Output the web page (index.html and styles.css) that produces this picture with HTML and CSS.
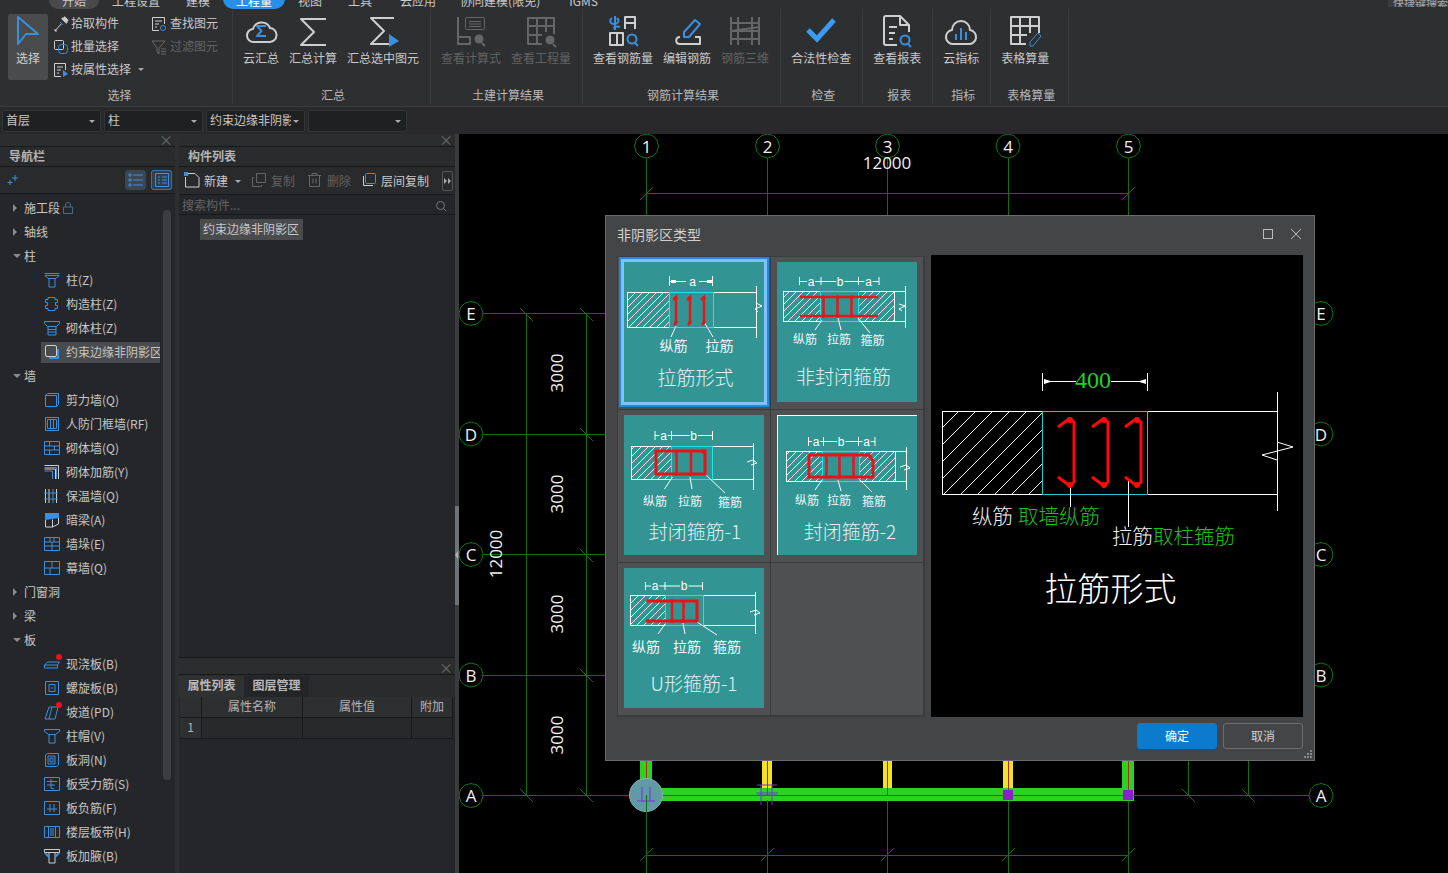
FILE: index.html
```html
<!DOCTYPE html>
<html lang="zh-CN">
<head>
<meta charset="utf-8">
<title>非阴影区类型</title>
<link rel="stylesheet" href="styles.css">
</head>
<body>
<div class="app">
  <div class="tabs">
    <span class="tab pill">开始</span><span class="tab">工程设置</span><span class="tab">建模</span><span class="tab active">工程量</span><span class="tab">视图</span><span class="tab">工具</span><span class="tab nudge">云应用</span><span class="tab">协同建模(限免)</span><span class="tab igms">IGMS</span>
    <span class="quick">快捷键搜索</span>
  </div>

  <div class="ribbon">
    <section class="group first">
      <div class="items">
        <div class="select-btn">
          <svg class="ic34" viewBox="0 0 34 34"><path class="b2" d="M7 3 27 20H15L7 30Z"/></svg>
          <span>选择</span>
        </div>
        <div class="smallcol wide">
          <div class="small"><svg class="ic16" viewBox="0 0 16 16"><path class="w1" d="M2 15 9 7M4 15H2v-2"/><path class="w2" d="M9 2l5 5M11 1l4 4"/><path class="b1" d="M7 6l3 3"/></svg>拾取构件</div>
          <div class="small"><svg class="ic16" viewBox="0 0 16 16"><rect class="w1" x="1.500" y="1.500" width="9" height="9" rx="1"/><rect class="b1" x="5.500" y="5.500" width="9" height="9" rx="3"/></svg>批量选择</div>
          <div class="small"><svg class="ic16" viewBox="0 0 16 16"><path class="w1" d="M8 14.500H1.500v-13h11V8M4 5h6M4 8h4M4 11h2"/><path class="bf" d="M10 8l5 4-5 3z"/></svg>按属性选择<i class="caret"></i></div>
        </div>
        <div class="smallcol">
          <div class="small"><svg class="ic16" viewBox="0 0 16 16"><path class="w1" d="M8 14.500H1.500v-13h12V8M4 5h7M4 8h4M4 11h2"/><circle class="b1" cx="12" cy="12" r="2.500"/></svg>查找图元</div>
          <div class="small off"><svg class="ic16" viewBox="0 0 16 16"><path class="d1" d="M1 2h13L8 9v6L6 13V9zM10 10h5M10 12.500h5M10 15h5"/></svg>过滤图元</div>
        </div>
      </div>
      <h3>选择</h3>
    </section>

    <section class="group">
      <div class="items">
        <div class="big"><svg class="ic34" viewBox="0 0 34 34"><path class="w2" d="M10 28a6.500 6.500 0 0 1-1-13 9 9 0 0 1 17-1 7 7 0 0 1-1 14Z"/><path class="b2" d="M22 12h-9l4.500 5-4.500 5h9"/></svg><span>云汇总</span></div>
        <div class="big"><svg class="ic34" viewBox="0 0 34 34"><path class="w2" d="M30 5H5l13 13L5 31h25"/></svg><span>汇总计算</span></div>
        <div class="big"><svg class="ic34" viewBox="0 0 34 34"><path class="w2" d="M28 4H5l13 13L5 30h20"/><path class="bf" d="M23 20l10 7-10 6z"/></svg><span>汇总选中图元</span></div>
      </div>
      <h3>汇总</h3>
    </section>

    <section class="group">
      <div class="items">
        <div class="big off"><svg class="ic34" viewBox="0 0 34 34"><path class="d2" d="M4 3v27h12v-7H4"/><rect class="d1" x="11.500" y="3.500" width="19" height="12" rx="1"/><path class="d1" d="M15 7.500h12M15 10h12M15 12.500h12"/><circle class="dh" cx="25" cy="25" r="5"/><path class="d2" d="M28 29l3 3"/></svg><span>查看计算式</span></div>
        <div class="big off"><svg class="ic34" viewBox="0 0 34 34"><path class="d2" d="M18 30H4V4h26v16M4 12h26M4 21h14M13 4v26M22 4v14"/><circle class="dh" cx="26" cy="26" r="5"/><path class="d2" d="M29 30l3 3"/></svg><span>查看工程量</span></div>
      </div>
      <h3>土建计算结果</h3>
    </section>

    <section class="group">
      <div class="items">
        <div class="big"><svg class="ic34" viewBox="0 0 34 34"><path class="b2" d="M7 14c3-2 5-2 7-1M6 4c-3 2-2 6 2 6s6-3 3-6M9 2v14"/><path class="w2" d="M19 15V3h10v12M19 9h10M4 19v12h13V19ZM11 19v12"/><circle class="b2" cx="26" cy="25" r="4.500"/><path class="b2" d="M29 29l3 3"/></svg><span>查看钢筋量</span></div>
        <div class="big"><svg class="ic34" viewBox="0 0 34 34"><path class="w2" d="M10 23c-5 0-5 7 0 7h20v-7h-5"/><path class="b2" d="M14 23v-5L25 6l5 4-11 13Z"/></svg><span>编辑钢筋</span></div>
        <div class="big off"><svg class="ic34" viewBox="0 0 34 34"><path class="d2" d="M3 3v28M10 3v28M24 3v28M31 3v28M3 9l28 0M3 17l28-4M3 17h28M3 25h28"/></svg><span>钢筋三维</span></div>
      </div>
      <h3>钢筋计算结果</h3>
    </section>

    <section class="group">
      <div class="items">
        <div class="big"><svg class="ic34" viewBox="0 0 34 34"><path class="check" d="M4 16l9 9L30 6"/></svg><span>合法性检查</span></div>
      </div>
      <h3>检查</h3>
    </section>

    <section class="group">
      <div class="items">
        <div class="big"><svg class="ic34" viewBox="0 0 34 34"><path class="w2" d="M17 31H6a2 2 0 0 1-2-2V4a2 2 0 0 1 2-2h14l9 9v7M20 2v9h9M9 13h8M9 19h6M9 25h4"/><circle class="b2" cx="25" cy="26" r="4.500"/><path class="b2" d="M28 30l3 3"/></svg><span>查看报表</span></div>
      </div>
      <h3>报表</h3>
    </section>

    <section class="group">
      <div class="items">
        <div class="big"><svg class="ic34" viewBox="0 0 34 34"><path class="w2" d="M10 30a7 7 0 0 1-2-14 9 9 0 0 1 18 0 7 7 0 0 1-2 14Z"/><path class="b2" d="M12 20v6M17 14v12M22 18v8"/></svg><span>云指标</span></div>
      </div>
      <h3>指标</h3>
    </section>

    <section class="group last">
      <div class="items">
        <div class="big"><svg class="ic34" viewBox="0 0 34 34"><path class="w2" d="M18 30H3V3h28v16M3 12h28M3 21h16M12 3v27M22 3v16"/><path class="b1" d="M22 32v-4l8-9 3 3-8 10Z"/></svg><span>表格算量</span></div>
      </div>
      <h3>表格算量</h3>
    </section>
  </div>

  <div class="selectors">
    <div class="combo"><span>首层</span><i class="caret"></i></div>
    <div class="combo"><span>柱</span><i class="caret"></i></div>
    <div class="combo"><span>约束边缘非阴影区</span><i class="caret"></i></div>
    <div class="combo"><span></span><i class="caret"></i></div>
  </div>

  <div class="workspace">
    <aside class="nav">
      <div class="strip"><span class="x">×</span></div>
      <div class="ptitle">导航栏</div>
      <div class="navtools">
        <svg class="ic12" viewBox="0 0 12 12"><path class="b1" d="M8 1v6M5 4h6M3 6v5M0.500 8.500h5"/></svg>
        <span class="toggle"><svg class="ic16" viewBox="0 0 16 16"><path class="b1" d="M1 2h2v2H1zM1 7h2v2H1zM1 12h2v2H1zM5 3h10M5 8h10M5 13h10"/></svg></span>
        <span class="toggle on"><svg class="ic16" viewBox="0 0 16 16"><path class="b1" d="M1.500 1.500h13v13h-13zM4 5h2M8 5h5M4 8h2M8 8h5M4 11h2M8 11h5"/></svg></span>
      </div>
      <div class="tree">
        <div class="parent"><i class="tri"></i>施工段<svg class="lock" viewBox="0 0 10 12"><path class="lk" d="M.5 5h9v6.500h-9zM2.500 5V3a2.500 2.500 0 0 1 5 0v2"/></svg></div>
        <div class="parent"><i class="tri"></i>轴线</div>
        <div class="parent"><i class="tri down"></i>柱</div>
        <div class="child"><svg class="ic16" viewBox="0 0 16 16"><path class="b1" d="M.5 1.500h15M1 3.500h14l-3 3H4ZM5 6.500v8.500h6V6.500"/></svg>柱(Z)</div>
        <div class="child"><svg class="ic16" viewBox="0 0 16 16"><path class="b1" d="M4 1.500h7v2h2.500v3h-2v3h2v3H11v2H4v-2H1.500v-3h2v-3h-2v-3H4Z"/></svg>构造柱(Z)</div>
        <div class="child"><svg class="ic16" viewBox="0 0 16 16"><path class="b1" d="M.5 1.500h15v2l-3 3H3.500l-3-3ZM4 6.500h8v8.500H4ZM4 9.500h8M4 12h8"/></svg>砌体柱(Z)</div>
        <div class="child sel"><svg class="ic16" viewBox="0 0 16 16"><path class="w1" d="M3 1.500h8a1.500 1.500 0 0 1 1.500 1.500v8a1.500 1.500 0 0 1-1.500 1.500H3A1.500 1.500 0 0 1 1.500 11V3A1.500 1.500 0 0 1 3 1.500Z"/><path class="b2" d="M14 5v9H5"/></svg>约束边缘非阴影区</div>
        <div class="parent"><i class="tri down"></i>墙</div>
        <div class="child"><svg class="ic16" viewBox="0 0 16 16"><path class="b1" d="M1.500 3.500h11v11h-11zM1.500 3.500l2-2h11v11l-2 2"/></svg>剪力墙(Q)</div>
        <div class="child"><svg class="ic16" viewBox="0 0 16 16"><path class="b1" d="M1.500 1.500h13v13h-13zM3.500 3.500h9v9h-9zM6.500 3.500v9M9.500 3.500v9"/></svg>人防门框墙(RF)</div>
        <div class="child"><svg class="ic16" viewBox="0 0 16 16"><path class="b1" d="M.5 1.500h15v13H.5zM.5 6h15M.5 10h15M5.500 1.500V6M10.500 6v4M5.500 10v4.500"/></svg>砌体墙(Q)</div>
        <div class="child"><svg class="ic16" viewBox="0 0 16 16"><path class="w1" d="M.5 1.500h14V15M.5 5h11v10"/><path class="b1" d="M.5 3.500h12V15M.5 7h8v8"/></svg>砌体加筋(Y)</div>
        <div class="child"><svg class="ic16" viewBox="0 0 16 16"><path class="w1" d="M1.500 1v14M12.500 1v14M5 1v14"/><path class="b1" d="M9 1v14M0 5h14M0 11h14"/></svg>保温墙(Q)</div>
        <div class="child"><svg class="ic16" viewBox="0 0 16 16"><path class="bf" d="M1 1h14v5L1 8Z"/><path class="w1" d="M1.500 8v7h7V7.500M8.500 15l6-3V6"/></svg>暗梁(A)</div>
        <div class="child"><svg class="ic16" viewBox="0 0 16 16"><path class="b1" d="M.5 1.500h15v13H.5zM.5 6h15M.5 10h15M6 1.500V6M10 1.500V6M8 6v8.500"/></svg>墙垛(E)</div>
        <div class="child"><svg class="ic16" viewBox="0 0 16 16"><path class="b1" d="M.5 1.500h15v13H.5zM.5 8h15M8 1.500V8M6 8v6.500"/></svg>幕墙(Q)</div>
        <div class="parent"><i class="tri"></i>门窗洞</div>
        <div class="parent"><i class="tri"></i>梁</div>
        <div class="parent"><i class="tri down"></i>板</div>
        <div class="child"><svg class="ic16" viewBox="0 0 16 16"><path class="b1" d="M.5 9l3-3h12l-2 3ZM.5 9v3h13V9"/></svg><b class="dot"></b>现浇板(B)</div>
        <div class="child"><svg class="ic16" viewBox="0 0 16 16"><path class="b1" d="M1.500 1.500h13v13h-13zM5 4.500h6v7H5zM8 7v2"/></svg>螺旋板(B)</div>
        <div class="child"><svg class="ic16" viewBox="0 0 16 16"><path class="b1" d="M1 15 5 3h6l3 0-3 12ZM8 3 5 15"/></svg><b class="dot"></b>坡道(PD)</div>
        <div class="child"><svg class="ic16" viewBox="0 0 16 16"><path class="b1" d="M.5 1.500h15v2l-4 3h-7l-4-3ZM5 6.500V15h6V6.500"/></svg>柱帽(V)</div>
        <div class="child"><svg class="ic16" viewBox="0 0 16 16"><path class="b1" d="M1.500 3l2-1.500h11V13l-2 1.500h-11ZM4 4h7v8H4ZM6 6h3v4H6Z"/></svg>板洞(N)</div>
        <div class="child"><svg class="ic16" viewBox="0 0 16 16"><path class="b1" d="M.5 1.500h15v13H.5zM3 5.500h10M3 9h8M7 3v9l3 1"/></svg>板受力筋(S)</div>
        <div class="child"><svg class="ic16" viewBox="0 0 16 16"><path class="b1" d="M.5 1.500h15v13H.5zM3 9h10M6 4v8M10 4v8"/></svg>板负筋(F)</div>
        <div class="child"><svg class="ic16" viewBox="0 0 16 16"><path class="b1" d="M.5 2.500h15v11H.5zM4.500 2.500v11M11.500 2.500v11M7 4v8M9 4v8"/></svg>楼层板带(H)</div>
        <div class="child"><svg class="ic16" viewBox="0 0 16 16"><path class="w1" d="M.5 1.500h15v3H.5zM5 4.500V15h6V4.500"/><path class="b2" d="M1 5l4 4M15 5l-4 4"/></svg>板加腋(B)</div>
      </div>
      <div class="navthumb"></div>
    </aside>

    <div class="mid">
      <div class="upper">
        <div class="strip"><span class="x">×</span></div>
        <div class="ptitle">构件列表</div>
        <div class="midtools">
          <span class="tool new"><svg class="ic16" viewBox="0 0 16 16"><path class="w1" d="M4 2.500V1.500h7l4 4v9.500H1.500V5"/><path class="bf" d="M0 0h4v4H0z"/></svg>新建<i class="caret"></i></span>
          <span class="tool off copy"><svg class="ic16" viewBox="0 0 16 16"><path class="d1" d="M5.500 1.500h9v9h-9zM3 5.500H1.500v9h9V13"/></svg>复制</span>
          <span class="tool off del"><svg class="ic16" viewBox="0 0 16 16"><path class="d1" d="M1 3.500h13M5 3.500v-2h5v2M2.500 3.500v11h10v-11M6 6.500v5M9 6.500v5"/></svg>删除</span>
          <span class="tool"><svg class="ic16" viewBox="0 0 16 16"><rect class="b1" x="4.500" y="1.500" width="10" height="10" rx="1"/><path class="w1" d="M2.500 4v9.500H12"/></svg>层间复制</span>
          <span class="more"><svg class="ic8" viewBox="0 0 8 8"><path class="gf" d="M0 1l3 3-3 3zM4 1l3 3-3 3z"/></svg></span>
        </div>
        <div class="search"><span>搜索构件...</span><svg class="ic12" viewBox="0 0 12 12"><circle class="g1" cx="5.500" cy="5.500" r="4"/><path class="g1" d="M8.500 8.500l2.500 2.500"/></svg></div>
        <div class="listitem">约束边缘非阴影区</div>
      </div>
      <div class="lower">
        <div class="strip"><span class="x">×</span></div>
        <div class="ptabs"><span class="ptab on">属性列表</span><span class="ptab">图层管理</span></div>
        <div class="ptable">
          <div class="th"></div><div class="th">属性名称</div><div class="th">属性值</div><div class="th">附加</div>
          <div class="td idx">1</div><div class="td"></div><div class="td"></div><div class="td"></div>
        </div>
      </div>
    </div>

    <div class="splitter"><span class="handle"><i></i></span></div>

    <main class="canvas">
      <svg class="cad" viewBox="459 134 989 739">
        <defs>
          <polygon id="bub" points="12,0 10.400,6 6,10.400 0,12 -6,10.400 -10.400,6 -12,0 -10.400,-6 -6,-10.400 0,-12 6,-10.400 10.400,-6"/>
        </defs>
        <g class="grid">
          <path d="M646.500 158V873M767.500 158V873M887.500 158V873M1008.500 158V873M1128.500 158V873"/>
          <path d="M483 313.500H1309M483 434.500H1309M483 554.500H1309M483 675.500H1309M483 795.500H1309"/>
          <path d="M646.500 193.500H1128.500M646.500 855.500H1128.500"/>
          <path d="M526.500 313.500V795.500M586.500 313.500V795.500M1188.500 313.500V795.500M1248.500 313.500V795.500"/>
          <path d="M640 200l13-13M1122 200l13-13M640 861l13-13M761 861l13-13M881 861l13-13M1002 861l13-13M1122 861l13-13"/>
          <path d="M520 308l13 13M580 308l13 13M580 428l13 13M580 549l13 13M580 669l13 13M520 789l13 13M580 789l13 13M1182 789l13 13M1242 789l13 13"/>
        </g>
        <g class="beams">
          <rect class="green" x="640" y="740" width="12" height="50"/>
          <rect class="green" x="1122" y="740" width="12" height="50"/>
          <rect class="yellow" x="762" y="740" width="10" height="50"/>
          <rect class="yellow" x="883" y="740" width="9" height="50"/>
          <rect class="yellow" x="1003" y="740" width="10" height="50"/>
          <rect class="green" x="646" y="788" width="488" height="13"/>
          <path class="redl" d="M646 795.500H1134M646.500 740V795M767.500 740V795M887.500 740V795M1008.500 740V795M1128.500 740V795"/>
          <circle class="node" cx="646" cy="795" r="16.500"/>
          <rect class="purple" x="1003" y="790" width="10" height="10"/>
          <rect class="purple" x="1123" y="790" width="10" height="10"/>
          <path class="violet" d="M642 787v14M650 787v14M637 801h18M757 785h20M757 795h20M761 785v20M772 785v20M756 793h22"/>
          <path class="gridover" d="M646.500 795V873M767.500 800V873M887.500 801V873M1008.500 801V873M1128.500 801V873M1134 795.500H1309"/>
        </g>
        <g class="bubbles">
          <use href="#bub" x="646.500" y="146"/><use href="#bub" x="767.500" y="146"/><use href="#bub" x="887.500" y="146"/><use href="#bub" x="1008" y="146"/><use href="#bub" x="1128.500" y="146"/>
          <use href="#bub" x="471" y="313.500"/><use href="#bub" x="471" y="434"/><use href="#bub" x="471" y="554.500"/><use href="#bub" x="471" y="675"/><use href="#bub" x="471" y="795.500"/>
          <use href="#bub" x="1321" y="313.500"/><use href="#bub" x="1321" y="434"/><use href="#bub" x="1321" y="554.500"/><use href="#bub" x="1321" y="675"/><use href="#bub" x="1321" y="795.500"/>
        </g>
        <g class="captxt">
          <text x="646.500" y="146">1</text><text x="767.500" y="146">2</text><text x="887.500" y="146">3</text><text x="1008" y="146">4</text><text x="1128.500" y="146">5</text>
          <text x="471" y="313.500">E</text><text x="471" y="434">D</text><text x="471" y="554.500">C</text><text x="471" y="675">B</text><text x="471" y="795.500">A</text>
          <text x="1321" y="313.500">E</text><text x="1321" y="434">D</text><text x="1321" y="554.500">C</text><text x="1321" y="675">B</text><text x="1321" y="795.500">A</text>
          <text x="887" y="162">12000</text>
          <text x="495" y="554" transform="rotate(-90 495 554)">12000</text>
          <text x="556" y="373" transform="rotate(-90 556 373)">3000</text>
          <text x="556" y="494" transform="rotate(-90 556 494)">3000</text>
          <text x="556" y="614" transform="rotate(-90 556 614)">3000</text>
          <text x="556" y="735" transform="rotate(-90 556 735)">3000</text>
        </g>
      </svg>
    </main>
  </div>

  <div class="dialog">
    <header class="dlghead">
      <span class="dlgtitle">非阴影区类型</span>
      <svg class="winbtn" viewBox="0 0 12 12"><rect class="wb" x="1.500" y="1.500" width="9" height="9"/></svg>
      <svg class="winbtn close" viewBox="0 0 12 12"><path class="wb" d="M1 1l10 10M11 1 1 11"/></svg>
    </header>
    <div class="dlgbody">
      <div class="cards">
        <div class="cell"><div class="card selected">
          <svg class="thumb" viewBox="0 0 140 140">
            <defs><pattern id="h1" width="7" height="7" patternUnits="userSpaceOnUse"><path class="hl" d="M-1 1L1-1M0 7L7 0M6 8L8 6"/></pattern></defs>
            <rect class="hatch" x="3.500" y="30.500" width="42" height="35"/>
            <path class="ln" d="M45 30.500H132.500V65.500H45M132.500 24V76M132 41l6 3-7 3 3 3"/>
            <rect class="cy" x="45.500" y="30.500" width="44" height="35"/>
            <path class="ln" d="M45.500 14v10M88.500 14v10M46 19.500h16M75 19.500h13M52 64l-5 11M80 60l9 15"/>
            <path class="dots" d="M47 18h5v3h-5zM83 18h5v3h-5z"/>
            <path class="rd" d="M49 38l3-3V61l-2 2M63 38l3-3V61l-2 2M77 38l3-3V61l-2 2"/>
            <path class="rn" d="M52 36h0M52 60h0M66 36h0M66 60h0M80 36h0M80 60h0"/>
            <text class="t dimt" x="68.500" y="19.500">a</text>
            <text class="t lb14" x="49.500" y="85">纵筋</text><text class="t lb14" x="95.500" y="85">拉筋</text>
            <text class="t ttl" x="71.500" y="116">拉筋形式</text>
          </svg>
        </div></div>
        <div class="cell"><div class="card">
          <svg class="thumb" viewBox="0 0 140 140">
            <rect class="hatch" x="6.500" y="29.500" width="37" height="30"/>
            <rect class="hatch" x="81.500" y="29.500" width="36" height="30"/>
            <path class="ln" d="M6.500 29.500H128M6.500 59.500H128M117.500 29.500V59.500M128.500 24V66M122 42l6 2-6 3 3 2"/>
            <rect class="cy" x="43.500" y="29.500" width="38" height="30"/>
            <path class="ln" d="M22.500 15v8M44 15v8M81.500 15v8M102 15v8M22.500 19.500H102M45 58l-7 10M61 56l3 12M81 56l12 15"/>
            <path class="rd" d="M23 35H101M23 54H101M46.500 35V54M60.500 35V54M74.500 35V54"/>
            <path class="rn" d="M46.500 35h0M60.500 35h0M74.500 35h0M46.500 54h0M60.500 54h0M74.500 54h0"/>
            <text class="t dimt" x="34" y="19.500">a</text><text class="t dimt" x="63" y="19.500">b</text><text class="t dimt" x="91.500" y="19.500">a</text>
            <text class="t lb12" x="28" y="78">纵筋</text><text class="t lb12" x="62" y="78">拉筋</text><text class="t lb12" x="95.500" y="79">箍筋</text>
            <text class="t ttl" x="66.500" y="115">非封闭箍筋</text>
          </svg>
        </div></div>
        <div class="cell"><div class="card">
          <svg class="thumb" viewBox="0 0 140 140">
            <rect class="hatch" x="7.500" y="31.500" width="40" height="33"/>
            <path class="ln" d="M7.500 31.500H129.500M7.500 64.500H129.500M129.500 28V75M123 47l6-2 4 3-6 2"/>
            <rect class="cy" x="47.500" y="31.500" width="41" height="33"/>
            <path class="ln" d="M31 16v9M47.500 16v9M88.500 16v9M31 20.500H88.500M48.500 62l-8 12M66 62l2 12M81 59l20 19"/>
            <path class="rdb" d="M32 36H81V59H32Z"/>
            <path class="rd" d="M52.500 36V59M67 36V59"/>
            <path class="rn" d="M52.500 59h0M67 59h0M79 37h0"/>
            <text class="t dimt" x="39.500" y="20.500">a</text><text class="t dimt" x="69.500" y="20.500">b</text>
            <text class="t lb12" x="31" y="87.500">纵筋</text><text class="t lb12" x="66" y="87.500">拉筋</text><text class="t lb12" x="106" y="88">箍筋</text>
            <text class="t ttl" x="71" y="117">封闭箍筋-1</text>
          </svg>
        </div></div>
        <div class="cell"><div class="card edged">
          <svg class="thumb" viewBox="0 0 140 140">
            <rect class="hatch" x="9.500" y="36.500" width="36" height="30"/>
            <rect class="hatch" x="82.500" y="36.500" width="36" height="30"/>
            <path class="ln" d="M9.500 36.500H129M9.500 66.500H129M118.500 36.500V66.500M129.500 32V75M123 52l6-2 4 3-6 2"/>
            <rect class="cy" x="45.500" y="36.500" width="37" height="30"/>
            <path class="ln" d="M31.500 22v9M46.500 22v9M81.500 22v9M98 22v9M31.500 26.500H98M45 65l-7 10M61 65l3 11M81 63l14 14"/>
            <path class="rdb" d="M32 40H92L96 46V62H32Z"/>
            <path class="rd" d="M49.500 40V62M62.500 40V62M76.500 40V62"/>
            <path class="rn" d="M49.500 62h0M62.500 62h0M76.500 62h0"/>
            <text class="t dimt" x="39" y="26.500">a</text><text class="t dimt" x="64" y="26.500">b</text><text class="t dimt" x="89.500" y="26.500">a</text>
            <text class="t lb12" x="30" y="86.500">纵筋</text><text class="t lb12" x="62" y="86.500">拉筋</text><text class="t lb12" x="97" y="87">箍筋</text>
            <text class="t ttl" x="73" y="117">封闭箍筋-2</text>
          </svg>
        </div></div>
        <div class="cell"><div class="card">
          <svg class="thumb" viewBox="0 0 140 140">
            <rect class="hatch" x="6.500" y="27.500" width="35" height="30"/>
            <path class="ln" d="M6.500 27.500H131.500M6.500 57.500H131.500M131.500 24V66M126 44l6-2 4 3-6 2"/>
            <rect class="cy" x="41.500" y="27.500" width="38" height="30"/>
            <path class="ln" d="M21.500 14v8M41 14v8M78.500 14v8M21.500 18H78.500M41 56l-7 10M59 55l2 11M73 54l20 13"/>
            <path class="rdb" d="M23 33H73V53H22"/>
            <path class="rd" d="M48 33V53M59.500 33V53"/>
            <path class="rn" d="M24 33h0M34 33h0M48 33h0M24 53h0M48 53h0M59.500 53h0"/>
            <text class="t dimt" x="31" y="18">a</text><text class="t dimt" x="60" y="18">b</text>
            <text class="t lb14" x="22" y="79.500">纵筋</text><text class="t lb14" x="63" y="79.500">拉筋</text><text class="t lb14" x="103" y="79.500">箍筋</text>
            <text class="t ttl" x="70" y="116">U形箍筋-1</text>
          </svg>
        </div></div>
        <div class="cell"></div>
      </div>
      <div class="preview">
        <svg class="prevsvg" viewBox="0 0 372 462">
          <defs><pattern id="h2" x="11" y="156" width="17" height="17" patternUnits="userSpaceOnUse"><path class="hl" d="M-1 1L1-1M0 17L17 0M16 18L18 16"/></pattern></defs>
          <rect class="hatch2" x="11.500" y="156.500" width="100" height="83"/>
          <path class="ln" d="M11.500 156.500H346.500M11.500 239.500H346.500M11.500 156.500V239.500M346.500 137V256M346 187l16 5-31 8 15 5"/>
          <rect class="cyp" x="111.500" y="156.500" width="105" height="83"/>
          <path class="ln" d="M111.500 118v18M216.500 118v18M113 126.500h32M180 126.500h35M139.500 232v20M197.500 225v47"/>
          <path class="dots" d="M113 124l8 2.500-8 2.500zM215 124l-8 2.500 8 2.500z"/>
          <path class="rp" d="M127 172l11-8 5 3V227l-4 4-12-9M161 172l11-8 5 3V227l-4 4-12-9M194 172l11-8 5 3V227l-4 4-12-9"/>
          <path class="rnp" d="M139 165h0M139 230h0M173 165h0M173 230h0M206 165h0M206 230h0"/>
          <text class="t p400" x="162" y="125">400</text>
          <text class="pt pw" x="41" y="260">纵筋</text><text class="pt pg" x="87" y="260">取墙纵筋</text>
          <text class="pt pw" x="181" y="280">拉筋</text><text class="pt pg" x="222" y="280">取柱箍筋</text>
          <text class="t pbig" x="179.500" y="332">拉筋形式</text>
        </svg>
      </div>
    </div>
    <footer class="dlgfoot">
      <button class="btn primary" type="button">确定</button>
      <button class="btn" type="button">取消</button>
      <svg class="grip" viewBox="0 0 8 8"><path class="gripd" d="M6 0h2v2H6zM3 3h2v2H3zM6 3h2v2H6zM0 6h2v2H0zM3 6h2v2H3zM6 6h2v2H6z"/></svg>
    </footer>
  </div>
</div>
</body>
</html>
```

FILE: styles.css
```css
* { box-sizing: border-box; }
html, body { margin: 0; height: 100%; }
body {
  background: #2d2e30;
  color: #c9c9c9;
  font: 12px/1.2 "Noto Sans CJK SC", "Noto Sans", sans-serif;
  overflow: hidden;
}
.app { position: relative; width: 1448px; height: 873px; overflow: hidden; display: flex; flex-direction: column; }
svg { display: block; flex: none; }
i, b { display: block; }

/* svg stroke helpers */
.b1, .b2, .w1, .w2, .d1, .d2, .g1, .lk { fill: none; stroke-linejoin: round; }
.b1 { stroke: #3a8fe0; stroke-width: 1; }
.b2 { stroke: #3a8fe0; stroke-width: 2; }
.w1 { stroke: #cfcfcf; stroke-width: 1; }
.w2 { stroke: #cfcfcf; stroke-width: 2; }
.d1 { stroke: #666; stroke-width: 1; }
.d2 { stroke: #666; stroke-width: 2; }
.g1 { stroke: #777; stroke-width: 1; }
.lk { stroke: #4f6a80; stroke-width: 1; }
.bf { fill: #3a8fe0; }
.gf { fill: #aaa; }
.dh { fill: #666; stroke: #2e2f31; stroke-width: 1; }
.check { fill: none; stroke: #3a9bf0; stroke-width: 5; }
.ic34 { width: 34px; height: 34px; }
.ic16 { width: 16px; height: 16px; }
.ic12 { width: 12px; height: 12px; }
.ic8 { width: 8px; height: 8px; }

/* tabs */
.tabs { height: 9px; flex: none; display: flex; align-items: flex-end; padding-left: 49px; background: #2e2f31; overflow: hidden; position: relative; }
.tab { height: 18px; padding: 3px 13px 0; line-height: 14px; color: #c9c9c9; white-space: nowrap; flex: none; }
.tab.pill { background: #4a4a4c; border-radius: 0 0 9px 9px; }
.tab.active { background: #2a8fe8; color: #fff; border-radius: 0 0 10px 10px; width: 62px; text-align: center; padding: 3px 0 0; }
.tab.nudge { padding: 3px 11px 0 15px; }
.tab.igms { padding-left: 16px; }
.quick { margin-left: auto; width: 60px; height: 7px; align-self: flex-start; background: #3b3c3e; color: #aaa; line-height: 7px; padding-left: 5px; overflow: hidden; white-space: nowrap; font-size: 11px; }

/* ribbon */
.ribbon { height: 98px; flex: none; display: flex; background: #2e2f31; border-bottom: 1px solid #3b3c3e; }
.group { display: flex; flex-direction: column; border-right: 1px solid #3a3b3d; padding: 0 11px 0 10px; height: 95px; }
.group.first { padding-left: 8px; }
.group.last { padding-right: 19px; border-right: 1px solid #3a3b3d; }
.items { display: flex; gap: 10px; height: 77px; }
.first .items { gap: 0; }
.group h3 { margin: 0; padding-left: 4px; font-weight: 400; font-size: 12px; line-height: 18px; text-align: center; color: #b8b8b8; white-space: nowrap; }
.first h3 { padding-left: 10px; }
.last h3 { padding-left: 0; margin-right: -12px; }
.select-btn { width: 40px; height: 66px; margin: 5px 5px 0 0; background: #4a4b4d; border-radius: 2px; display: flex; flex-direction: column; align-items: center; color: #d0d0d0; }
.select-btn span { line-height: 20px; }
.smallcol { width: 70px; padding-top: 3px; }
.smallcol.wide { width: 98px; }
.small { height: 23px; display: flex; align-items: center; gap: 3px; color: #c9c9c9; white-space: nowrap; }
.wide .small { gap: 2px; }
.small.off { color: #636363; }
.small .caret { margin-left: 5px; }
.big { display: flex; flex-direction: column; align-items: center; padding-top: 5px; color: #c9c9c9; white-space: nowrap; }
.big span { line-height: 20px; }
.big.off { color: #626262; }
.caret { width: 0; height: 0; border: 3px solid transparent; border-top: 3px solid #aaa; border-bottom: 0; flex: none; }

/* selectors */
.selectors { height: 27px; flex: none; display: flex; gap: 3px; padding: 3px 0 2px 2px; background: #29292b; }
.combo { width: 99px; height: 22px; background: #1f2022; border: 1px solid #333436; border-radius: 2px; display: flex; align-items: center; padding: 0 5px 2px 3px; color: #c6c6c6; }
.combo span { flex: 1; overflow: hidden; white-space: nowrap; }
.combo .caret { margin: 2px 0 0 2px; }

/* workspace */
.workspace { flex: 1; display: flex; min-height: 0; background: #2d2e30; }
.strip { height: 13px; background: #2c2d2f; border-bottom: 1px solid #18191a; display: flex; justify-content: flex-end; padding-right: 2px; }
.x { color: #666; font-size: 14px; line-height: 11px; }
.ptitle { height: 20px; line-height: 17px; padding-left: 9px; font-weight: 700; background: #2a2b2d; border-bottom: 1px solid #18191a; color: #b4b4b4; }

.nav { width: 175px; flex: none; background: #252629; position: relative; overflow: hidden; }
.navtools { height: 27px; border-bottom: 1px solid #18191a; display: flex; align-items: center; padding-left: 7px; gap: 5px; background: #292a2c; }
.navtools .ic12 { margin-right: 101px; }
.toggle { width: 21px; height: 20px; background: #3c4650; border-radius: 3px; display: flex; align-items: center; justify-content: center; }
.toggle.on { background: #2f3f50; box-shadow: inset 0 0 0 1px #4a6f96; }
.tree { padding-top: 2px; }
.parent { height: 24px; display: flex; align-items: center; padding-left: 13px; color: #c6c6c6; }
.tri { width: 0; height: 0; margin-right: 7px; border: 4px solid transparent; border-left: 4px solid #8a8a8a; border-right: 0; flex: none; }
.tri.down { border: 4px solid transparent; border-top: 4px solid #8a8a8a; border-bottom: 0; margin: 0 3px 0 0; }
.lock { width: 10px; height: 12px; margin-left: 3px; }
.child { height: 24px; display: flex; align-items: center; gap: 6px; padding-left: 44px; color: #c6c6c6; position: relative; white-space: nowrap; }
.child.sel { height: 21px; margin: 1.5px 15px 1.5px 41px; padding-left: 3px; background: #4a4b4d; overflow: hidden; }
.dot { position: absolute; left: 56px; top: 2px; width: 6px; height: 6px; border-radius: 50%; background: #f01020; }
.navthumb { position: absolute; left: 163px; top: 76px; width: 8px; height: 570px; background: #3c3d3f; border-radius: 4px; }

.mid { width: 276px; margin-left: 4px; flex: none; display: flex; flex-direction: column; gap: 4px; }
.upper { height: 524px; background: #252629; border-bottom: 1px solid #18191a; }
.lower { flex: 1; background: #252629; }
.midtools { height: 28px; border-bottom: 1px solid #18191a; display: flex; align-items: center; padding: 2px 0 0 5px; background: #292a2c; position: relative; }
.tool { display: flex; align-items: center; gap: 4px; color: #c9c9c9; font-size: 12px; margin-right: 12px; }
.tool svg { margin-top: -2px; }
.tool.new { margin-right: 10px; }
.tool.new .caret { margin-left: 3px; }
.tool.off { color: #616161; }
.tool.del { margin-right: 10px; }
.more { position: absolute; left: 263px; top: 4px; width: 11px; height: 20px; border: 1px solid #555; border-radius: 2px; display: flex; align-items: center; justify-content: center; }
.search { height: 20px; display: flex; justify-content: space-between; align-items: center; padding: 2px 8px 0 3px; color: #636363; border-bottom: 1px solid #18191a; }
.listitem { width: 103px; height: 21px; margin: 4px 0 0 21px; background: #4a4b4d; padding-left: 3px; line-height: 19px; color: #c6c6c6; }
.ptabs { display: flex; height: 22px; padding-top: 1px; background: #2a2b2d; }
.ptab { width: 65px; text-align: center; line-height: 18px; font-weight: 700; background: #242527; color: #b8b8b8; }
.ptab.on { background: #303133; }
.ptable { display: grid; grid-template-columns: 22px 101px 109px 41px; grid-auto-rows: 21px; margin-left: 1px; }
.th, .td { border-right: 1px solid #18191a; border-bottom: 1px solid #18191a; text-align: center; line-height: 18px; }
.th { background: #2e2f31; color: #b4b4b4; }
.td { background: #28292b; }
.td.idx { color: #b4b4b4; background: #2e2f31; }

.splitter { width: 4px; flex: none; background: #3a3b3d; position: relative; }
.handle { position: absolute; left: 0; top: 372px; width: 4px; height: 99px; background: #6d7378; display: block; }
.handle i { position: absolute; left: 0; top: 45px; width: 0; height: 0; border: 4px solid transparent; border-right: 3px solid #aeb3b6; border-left: 0; }

/* cad canvas */
.canvas { flex: 1; background: #000; min-width: 0; }
.cad { width: 989px; height: 739px; }
.grid path { fill: none; stroke: #0d720d; stroke-width: 1; }
.green { fill: #2fd024; }
.yellow { fill: #f2e02a; }
.redl { fill: none; stroke: #b02c14; stroke-width: 1; }
.node { fill: #5f9aa5; stroke: #7fb2bb; stroke-width: 1; }
.purple { fill: #8a1fd0; }
.violet { fill: none; stroke: #7a30e0; stroke-width: 1; }
.gridover { fill: none; stroke: #0d720d; stroke-width: 1; }
.bubbles use { fill: #000; stroke: #0d7a0d; stroke-width: 1; }
.captxt text { font-family: "Open Sans", sans-serif; font-size: 17px; fill: #f0f0f0; text-anchor: middle; dominant-baseline: central; }

/* dialog */
.dialog { position: absolute; left: 605px; top: 215px; width: 710px; height: 546px; background: #444547; border: 1px solid #6a6b6d; display: flex; flex-direction: column; }
.dlghead { height: 39px; flex: none; display: flex; align-items: center; padding: 0 12px 3px 11px; }
.dlgtitle { font-size: 14px; color: #d0d0d0; flex: 1; }
.winbtn { width: 12px; height: 12px; }
.winbtn.close { margin-left: 16px; }
.wb { fill: none; stroke: #bbb; stroke-width: 1; }
.dlgbody { display: flex; gap: 7px; padding-left: 12px; height: 462px; flex: none; }
.cards { width: 306px; height: 459px; margin-top: 2px; display: grid; grid-template-columns: 153px 153px; grid-template-rows: 153px 153px 153px; background: #4f5052; box-shadow: 0 0 0 1px #3c3d3f; }
.cell { padding: 5px 0 0 6px; border-right: 1px solid #3a3b3d; border-bottom: 1px solid #3a3b3d; }
.card { width: 140px; height: 140px; background: #339494; }
.card.selected { box-shadow: 0 0 0 3px #82c0ff, 0 0 0 5px #1e88e5; }
.card.edged { box-shadow: inset 1px 1px 0 #fff; }
.thumb { width: 140px; height: 140px; }
.hatch { fill: url(#h1); stroke: #fff; stroke-width: 1; }
.hatch2 { fill: url(#h2); stroke: #fff; stroke-width: 1; }
.hl { fill: none; stroke: #f2f2f2; stroke-width: 1; }
.ln { fill: none; stroke: #fff; stroke-width: 1; }
.cy { fill: none; stroke: #1fe6e6; stroke-width: 1; }
.cyp { fill: none; stroke: #27c8c8; stroke-width: 1; }
.rd { fill: none; stroke: #e8161c; stroke-width: 2.500; }
.rdb { fill: none; stroke: #e61418; stroke-width: 3; }
.rn { fill: none; stroke: #f01010; stroke-width: 3.500; stroke-linecap: round; }
.rp { fill: none; stroke: #ff0808; stroke-width: 3; stroke-linejoin: round; }
.rnp { fill: none; stroke: #ff0808; stroke-width: 6; stroke-linecap: round; }
.dots { fill: #fff; }
.t { text-anchor: middle; dominant-baseline: central; font-family: "Noto Sans CJK SC", sans-serif; }
.dimt { font-size: 12px; fill: #fff; stroke: #339494; stroke-width: 3px; paint-order: stroke; font-family: "Liberation Sans", sans-serif; }
.lb14 { font-size: 14px; fill: #eef7f7; transform: translateY(-2px); }
.lb12 { font-size: 12px; fill: #eef7f7; transform: translateY(-2px); }
.ttl { font-size: 19px; fill: #e2f2f2; font-weight: 300; transform: translateY(-2px); }
.preview { width: 372px; height: 462px; background: #000; }
.prevsvg { width: 372px; height: 462px; }
.p400 { font-family: "Liberation Serif", serif; font-size: 24px; fill: #22d022; }
.pt { font-size: 20.500px; dominant-baseline: central; font-family: "Noto Sans CJK SC", sans-serif; font-weight: 300; }
.pw { fill: #f0f0f0; }
.pg { fill: #1fc01f; }
.pbig { font-size: 33px; fill: #fff; font-weight: 300; }
.dlgfoot { flex: 1; display: flex; justify-content: flex-end; align-items: flex-start; gap: 6px; padding: 6px 11px 0 0; position: relative; }
.btn { width: 80px; height: 26px; padding: 0; border: 1px solid #6c6d6f; border-radius: 3px; background: #444547; color: #d0d0d0; font: inherit; }
.btn.primary { background: #0b7bcd; border-color: #0b7bcd; color: #fff; }
.grip { position: absolute; right: 2px; bottom: 2px; width: 8px; height: 8px; }
.gripd { fill: #8a8a8a; }
```
